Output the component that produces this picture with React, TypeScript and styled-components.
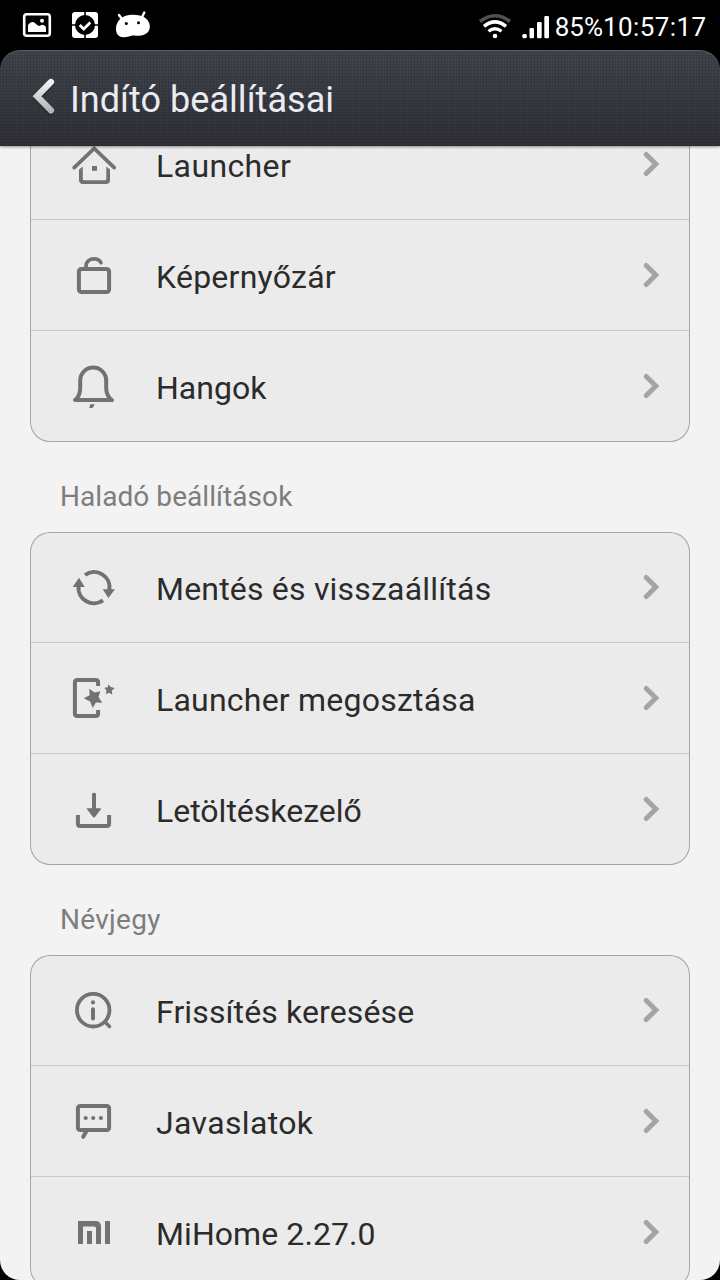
import React from "react";
import styled, { createGlobalStyle } from "styled-components";

const GlobalStyle = createGlobalStyle`
  * { box-sizing: border-box; }
  body { margin: 0; background: #000; font-family: Roboto, "Noto Sans", sans-serif; }
`;

const Screen = styled.div`
  width: 720px;
  height: 1280px;
  display: flex;
  flex-direction: column;
  background: #000;
  overflow: hidden;
`;

const StatusBar = styled.header`
  height: 50px;
  flex: none;
  display: flex;
  align-items: center;
  justify-content: space-between;
  padding: 0 13.6px 0 20px;
  color: #fff;
`;

const StatusGroup = styled.div`
  display: flex;
  align-items: center;
`;

const StatusText = styled.span<{ $spacing: number }>`
  font-size: 26px;
  line-height: 50px;
  padding-top: 3px;
  letter-spacing: ${(p) => p.$spacing}px;
  white-space: nowrap;
`;

const TitleBar = styled.div`
  position: relative;
  z-index: 1;
  height: 96px;
  flex: none;
  display: flex;
  align-items: center;
  padding-left: 28px;
  border-radius: 20px 20px 0 0;
  background:
    repeating-linear-gradient(90deg, rgba(0, 0, 0, 0.09) 0 1px, transparent 1px 3px),
    repeating-linear-gradient(0deg, rgba(0, 0, 0, 0.09) 0 1px, transparent 1px 3px),
    linear-gradient(#42454c, #393c45 45%, #303036);
  box-shadow: inset 0 1px 0 #5b5d61, 0 1px 3px rgba(0, 0, 0, 0.4);
`;

const Title = styled.h1`
  margin: 0 0 0 10px;
  padding-top: 3px;
  font-size: 36px;
  font-weight: 400;
  line-height: 44px;
  letter-spacing: 0.04px;
  color: #ececf0;
  white-space: nowrap;
`;

const Content = styled.main`
  flex: 1;
  min-height: 0;
  overflow: hidden;
  padding: 0 30px;
  background: #f3f3f3;
  border-radius: 0 0 20px 20px;
`;

const List = styled.div`
  margin-top: -37px;
`;

const SectionTitle = styled.h2<{ $spacing: number }>`
  margin: 0;
  height: 90px;
  padding: 38px 0 0 30px;
  font-size: 28px;
  line-height: 34px;
  font-weight: 400;
  letter-spacing: ${(p) => p.$spacing}px;
  color: #7d7d7d;
  white-space: nowrap;
`;

const Card = styled.section`
  padding: 0 1px;
  border-radius: 20px;
  background: #ebebeb;
  box-shadow: inset 0 0 0 1px #a6a6a6;
`;

const Row = styled.div`
  height: 111px;
  display: flex;
  align-items: center;
  padding: 0 25px 0 39px;
  border-bottom: 1px solid #c8c8c8;
  &:last-child { border-bottom-color: transparent; }
`;

const Label = styled.span<{ $spacing: number }>`
  flex: 1;
  padding: 3px 0 0 38px;
  font-size: 32px;
  line-height: 38px;
  letter-spacing: ${(p) => p.$spacing}px;
  color: #2b2b2b;
  white-space: nowrap;
`;

const Glyph = styled.svg`
  flex: none;
  display: block;
  fill: none;
  stroke: #727272;
  stroke-width: 4;
  .solid { fill: #727272; stroke: none; }
`;

const icons = {
  home: (
    <>
      <path d="M4.2 27.6 24.2 8.4l20 19.2" strokeWidth="3.7" strokeLinecap="round" />
      <path className="solid" d="M9 29.5l3.8-3V39q0 1.2 1.2 1.2h21q1.3 0 1.3-1.2V26.5l3.7 3V40q0 4-4 4H13q-4 0-4-4z" />
      <rect className="solid" x="22" y="26" width="5" height="4.8" />
    </>
  ),
  lock: (
    <>
      <rect x="8.9" y="17.9" width="30.2" height="23.2" rx="2.5" />
      <path d="M16 17v-1.5C16 10.5 19.500 7.800 24 7.800c3.400 0 5.900 1.600 7 3.900" strokeWidth="3.700" strokeLinecap="round" />
    </>
  ),
  bell: (
    <>
      <path d="M5 38.100C9 35 10.200 31 10.200 26v-7.500a13 13 0 0 1 26 0V26c0 5 1.300 9 5.800 12.100z" strokeLinejoin="round" />
      <path className="solid" d="M20.300 42.300h4.500L22.500 46h-3.200z" />
    </>
  ),
  sync: (
    <>
      <path d="M15 12A15.5 15.5 0 0 1 39.4 27M8.5 23.5A15.5 15.5 0 0 0 33 37.4" />
      <path className="solid" d="M32.7 26.2H45L38.4 35zM2.7 23.9h12L9 14.8z" />
    </>
  ),
  share: (
    <>
      <path d="M28.1 12V8.4q0-2.5-2.5-2.5H7.4q-2.5 0-2.5 2.5v31.2q0 2.5 2.5 2.5h18.2q2.5 0 2.5-2.5V36" />
      <path className="solid" d="M19.3 14.7l5.2 3.8 5.8-1.2-1.8 5.7 3.8 5.7-6.4-.3-3.2 5.6-2.6-6.6-6.4-3.1 5.9-3zM38 10.3l2.9 2.8 3.8 1-2.9 2.7.5 3.9-3.2-2-3.3 1.6.7-3.6-2.2-3 3.6-.4z" />
    </>
  ),
  download: (
    <>
      <path className="solid" d="M22 9q0-1.3 2-1.3T26 9v14.3h4.4q1.2 0 .5 1L25 32q-1 1.2-2 0l-6-7.7q-.7-1 .5-1H22z" />
      <path d="M7.9 30v8.6q0 2.5 2.5 2.5h26.2q2.5 0 2.5-2.5V30" />
    </>
  ),
  update: (
    <>
      <circle cx="23.2" cy="24.2" r="16.3" strokeWidth="3.8" />
      <path d="M35.3 36.3l4.2 4.2" strokeWidth="3.5" strokeLinecap="round" />
      <circle className="solid" cx="23" cy="16.4" r="2.1" />
      <path d="M23 23.3v9.2" strokeLinecap="round" />
    </>
  ),
  chat: (
    <>
      <rect x="7.9" y="8.9" width="31.2" height="24.2" rx="2.2" />
      <path d="M16 35l-2.8 4.8" strokeLinecap="round" />
      <g className="solid">
        <circle cx="15.7" cy="21" r="2.1" />
        <circle cx="23.2" cy="21" r="2.1" />
        <circle cx="30.9" cy="21" r="2.1" />
      </g>
    </>
  ),
  mi: (
    <path className="solid" d="M8 13h17.5Q31 13 31 18.5V36h-5V20.2q0-1.7-1.7-1.7H13V36H8zM17 23h5v13h-5zM35 13h5v23h-5z" />
  ),
};

type Item = { icon: keyof typeof icons; label: string; spacing?: number };

const sections: { title?: string; titleSpacing?: number; items: Item[] }[] = [
  {
    items: [
      { icon: "home", label: "Launcher", spacing: 0.38 },
      { icon: "lock", label: "Képernyőzár", spacing: 0.25 },
      { icon: "bell", label: "Hangok" },
    ],
  },
  {
    title: "Haladó beállítások",
    titleSpacing: 0.06,
    items: [
      { icon: "sync", label: "Mentés és visszaállítás", spacing: 0.2 },
      { icon: "share", label: "Launcher megosztása", spacing: 0.22 },
      { icon: "download", label: "Letöltéskezelő" },
    ],
  },
  {
    title: "Névjegy",
    titleSpacing: 0.3,
    items: [
      { icon: "update", label: "Frissítés keresése", spacing: 0.12 },
      { icon: "chat", label: "Javaslatok", spacing: 0.36 },
      { icon: "mi", label: "MiHome 2.27.0", spacing: 0.08 },
    ],
  },
];

const Chevron = () => (
  <svg width="24" height="32" viewBox="0 0 24 32" fill="none" stroke="#a4a4a4" strokeWidth="5" strokeLinecap="round">
    <path d="M6.2 6.4 15.800 16l-9.600 9.600" />
  </svg>
);

const NotificationIcons = () => (
  <svg width="136" height="50" viewBox="20 0 136 50" fill="#fff">
    <rect x="24.2" y="14.2" width="25.6" height="21.600" rx="2.5" fill="none" stroke="#fff" strokeWidth="2.6" />
    <path d="M28 32v-7q3.5-5 7.5-1.5 3 3.5 5 2 2.5-2 5.5 1.5v5z" />
    <circle cx="42" cy="20.8" r="2" />
    <rect x="72" y="12" width="26" height="26" rx="3" />
    <path d="M85 11v28M71 25h28" stroke="#000" strokeWidth="1.6" />
    <circle cx="85" cy="25" r="10" fill="#000" />
    <path d="M79.7 25l4 4 6.6-6.6" fill="none" stroke="#fff" strokeWidth="2.8" />
    <path d="M119 15l3 4M144.3 12.5l-2 4" stroke="#fff" strokeWidth="2.4" strokeLinecap="round" />
    <path d="M116 29c0-8 6-13.6 15-14.2 10-.8 18 3.2 18.8 10.7.6 6-4.3 10.3-11 10.3-3 0-4.8-.6-7.3 0-3 .8-5 1.7-8.500 1.400-4.500-.4-7-3.200-7-8.200z" />
    <circle cx="126.3" cy="23.6" r="1.5" fill="#000" />
    <circle cx="138.5" cy="22.7" r="1.5" fill="#000" />
  </svg>
);

const SignalIcons = () => (
  <svg width="78" height="50" viewBox="476 0 78 50" fill="none" stroke="#fff">
    <path d="M479 21.5q15-11.500 30 0" stroke="#505050" strokeWidth="3.6" />
    <path d="M483 26.3q11-8.800 22 0" strokeWidth="3.5" />
    <path d="M487.5 31.3q6.500-5 13 0" strokeWidth="3.3" />
    <circle cx="494" cy="36" r="2.3" fill="#fff" stroke="none" />
    <g fill="#fff" stroke="none">
      <rect x="521.3" y="34" width="4.5" height="4.3" rx="1.5" />
      <rect x="528.5" y="28" width="4.5" height="10.3" rx="1.2" />
      <rect x="536" y="22" width="4.7" height="16.3" rx="1.2" />
      <rect x="543.3" y="16" width="4.7" height="22.3" rx="1.2" />
    </g>
  </svg>
);

const BackArrow = () => (
  <svg width="32" height="48" viewBox="28 74 32 48" fill="none">
    <defs>
      <linearGradient id="back" x1="0" y1="0" x2="0" y2="1">
        <stop offset="0" stopColor="#f2f2f2" />
        <stop offset="1" stopColor="#b5b5b7" />
      </linearGradient>
    </defs>
    <path d="M51 83.5 37 98l14 14.5" stroke="#25262b" strokeWidth="6.2" strokeLinecap="round" />
    <path d="M51 82 37 96.300l14 14.200" stroke="url(#back)" strokeWidth="6.2" strokeLinecap="round" />
  </svg>
);

export default function App() {
  return (
    <Screen>
      <GlobalStyle />
      <StatusBar>
        <NotificationIcons />
        <StatusGroup>
          <SignalIcons />
          <StatusText $spacing={0}>85%</StatusText>
          <StatusText $spacing={0.4}>10:57:17</StatusText>
        </StatusGroup>
      </StatusBar>
      <TitleBar>
        <BackArrow />
        <Title>Indító beállításai</Title>
      </TitleBar>
      <Content>
        <List>
          {sections.map((section, i) => (
            <React.Fragment key={i}>
              {section.title && (
                <SectionTitle $spacing={section.titleSpacing ?? 0}>{section.title}</SectionTitle>
              )}
              <Card>
                {section.items.map((item) => (
                  <Row key={item.label}>
                    <Glyph width="48" height="48" viewBox="0 0 48 48">{icons[item.icon]}</Glyph>
                    <Label $spacing={item.spacing ?? 0}>{item.label}</Label>
                    <Chevron />
                  </Row>
                ))}
              </Card>
            </React.Fragment>
          ))}
        </List>
      </Content>
    </Screen>
  );
}
